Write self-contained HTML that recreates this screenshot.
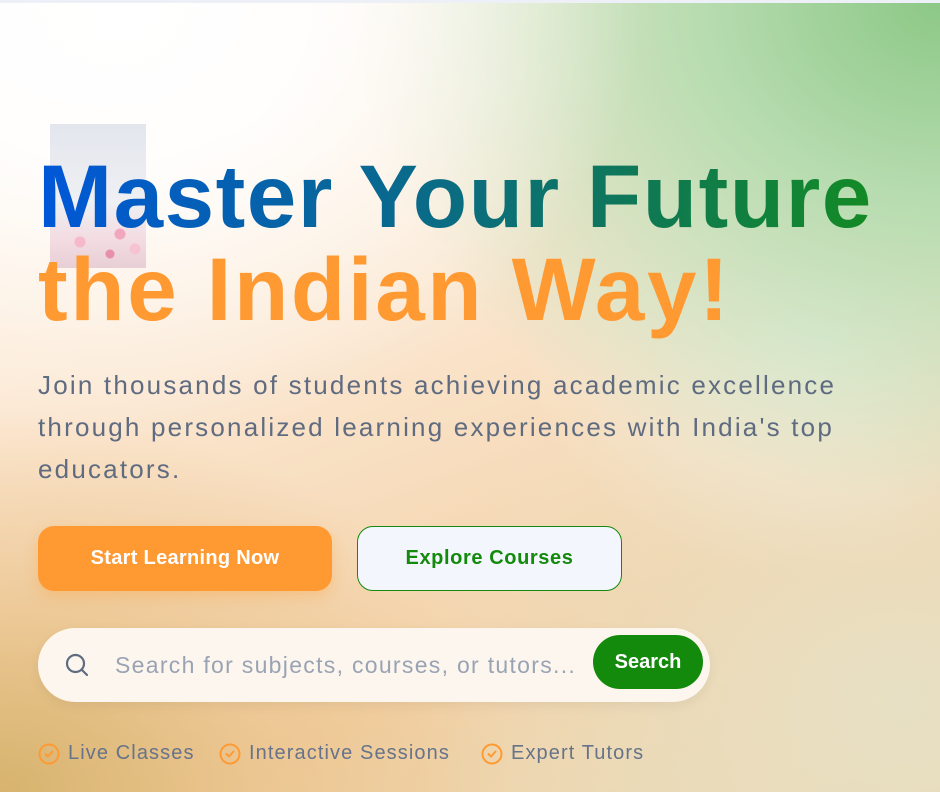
<!DOCTYPE html>
<html><head><meta charset="utf-8"><style>
*{margin:0;padding:0;box-sizing:border-box}
body{width:940px;height:792px;overflow:hidden;font-family:"Liberation Sans",sans-serif;position:relative;
background:
radial-gradient(ellipse 520px 420px at 120px 20px,#ffffff 0%,rgba(255,255,255,.9) 35%,rgba(255,255,255,0) 100%),
radial-gradient(ellipse 600px 500px at 940px 0px,#8cc886 0%,#b7dcb0 40%,rgba(220,238,222,0) 100%),
radial-gradient(ellipse 300px 250px at 820px 330px,rgba(240,246,236,.8) 0%,rgba(240,246,236,0) 100%),
radial-gradient(ellipse 520px 380px at 0px 792px,#d7b36e 0%,rgba(232,190,130,.6) 50%,rgba(240,200,150,0) 100%),
radial-gradient(ellipse 500px 400px at 900px 700px,#e8e0c4 0%,rgba(232,224,196,0) 100%),
linear-gradient(160deg,#fff8f0 0%,#fbe6cf 40%,#f3d2a8 75%,#e9d7b0 100%);}
.top{position:absolute;left:0;top:0;width:940px;height:3px;background:#eef0f8}
.img{position:absolute;left:50px;top:124px;width:96px;height:144px;
background:radial-gradient(circle at 70px 110px,#f2a7c0 0 5px,transparent 6px),radial-gradient(circle at 30px 118px,#f5b8cc 0 5px,transparent 6px),radial-gradient(circle at 60px 130px,#e88fae 0 4px,transparent 5px),radial-gradient(circle at 85px 125px,#f7c2d2 0 5px,transparent 6px),linear-gradient(#e4e6ee 0%,#eef0f3 55%,#f3dce2 80%,#e8cfd6 100%)}
h1{position:absolute;left:38px;font-weight:700;font-size:89px;letter-spacing:1.5px;line-height:1;white-space:nowrap}
.l1{top:152px}
.l2{top:245px;color:#ff9a33;letter-spacing:2.6px}
.g{background:linear-gradient(90deg,#0057d9 0%,#0a6a8a 45%,#0f7a50 75%,#138a24 100%);-webkit-background-clip:text;background-clip:text;color:transparent}
p{position:absolute;left:38px;top:364px;width:900px;font-size:26px;line-height:42px;color:#5f6b80;letter-spacing:2.2px;white-space:nowrap}
.b1{position:absolute;left:38px;top:526px;width:294px;height:65px;border-radius:16px;background:#ff9a33;color:#fff;font-size:20px;font-weight:700;display:flex;align-items:center;justify-content:center;box-shadow:0 6px 14px rgba(255,154,51,.3);letter-spacing:.3px}
.b2{position:absolute;left:357px;top:526px;width:265px;height:65px;border-radius:16px;background:#f3f6fc;border:1px solid #138a0c;color:#138a0c;font-size:20px;font-weight:700;display:flex;align-items:center;justify-content:center;letter-spacing:.6px}
.sb{position:absolute;left:38px;top:628px;width:672px;height:74px;border-radius:37px;background:#fcf6ee;box-shadow:0 4px 12px rgba(0,0,0,.06)}
.sb .ph{position:absolute;left:77px;top:24px;font-size:23px;color:#9aa3b4;letter-spacing:1.3px}
.sb svg{position:absolute;left:26px;top:24px}
.sbtn{position:absolute;left:555px;top:7px;width:110px;height:54px;border-radius:27px;background:#138a0c;color:#fff;font-weight:700;font-size:20px;display:flex;align-items:center;justify-content:center}
.f{position:absolute;top:742px;font-size:20px;color:#66738a;display:flex;align-items:center;gap:8px;letter-spacing:1.1px}
</style></head><body>
<div class="top"></div>
<div class="img"></div>
<h1 class="l1 g">Master Your Future</h1>
<h1 class="l2">the Indian Way!</h1>
<p>Join thousands of students achieving academic excellence<br>through personalized learning experiences with India's top<br>educators.</p>
<div class="b1">Start Learning Now</div>
<div class="b2">Explore Courses</div>
<div class="sb"><svg width="26" height="26" viewBox="0 0 26 26" fill="none" stroke="#5f6b80" stroke-width="2.2" stroke-linecap="round"><circle cx="11.5" cy="11.5" r="8.5"/><path d="M18 18l5 5"/></svg><span class="ph">Search for subjects, courses, or tutors...</span><div class="sbtn">Search</div></div>
<div class="f" style="left:38px"><svg width="22" height="22" viewBox="0 0 22 22" fill="none" stroke="#ff9a33" stroke-width="2"><circle cx="11" cy="11" r="9.5"/><path d="M7.5 11l2.5 2.5 4.5-5" stroke-linecap="round" stroke-linejoin="round"/></svg>Live Classes</div>
<div class="f" style="left:219px"><svg width="22" height="22" viewBox="0 0 22 22" fill="none" stroke="#ff9a33" stroke-width="2"><circle cx="11" cy="11" r="9.5"/><path d="M7.5 11l2.5 2.5 4.5-5" stroke-linecap="round" stroke-linejoin="round"/></svg>Interactive Sessions</div>
<div class="f" style="left:481px"><svg width="22" height="22" viewBox="0 0 22 22" fill="none" stroke="#ff9a33" stroke-width="2"><circle cx="11" cy="11" r="9.5"/><path d="M7.5 11l2.5 2.5 4.5-5" stroke-linecap="round" stroke-linejoin="round"/></svg>Expert Tutors</div>
</body></html>
